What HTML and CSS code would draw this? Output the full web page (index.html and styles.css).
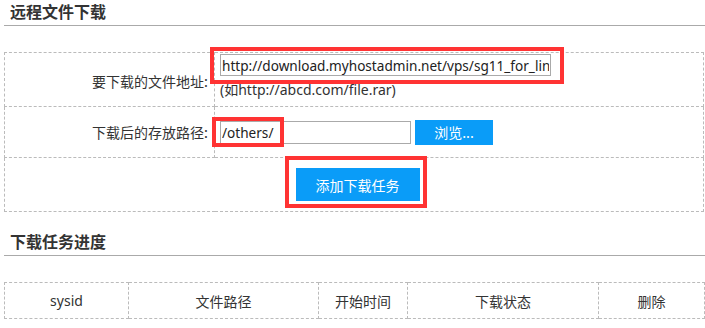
FILE: index.html
```html
<!DOCTYPE html>
<html lang="zh-CN">
<head>
<meta charset="utf-8">
<title>远程文件下载</title>
<link rel="stylesheet" href="styles.css">
</head>
<body>
<div class="page">
  <h2 class="title">远程文件下载</h2>
  <table class="form">
    <colgroup><col class="c-lbl"><col></colgroup>
    <tr class="r1">
      <td class="lbl">要下载的文件地址:</td>
      <td class="val">
        <input class="field url" type="text" value="http://download.myhostadmin.net/vps/sg11_for_linux.tar.gz">
        <div class="hint">(如http://abcd.com/file.rar)</div>
      </td>
    </tr>
    <tr class="r2">
      <td class="lbl">下载后的存放路径:</td>
      <td class="val">
        <div class="inline">
          <input class="field path" type="text" value="/others/">
          <button class="btn browse" type="button">浏览...</button>
        </div>
      </td>
    </tr>
    <tr class="r3">
      <td class="act" colspan="2"><button class="btn add" type="button">添加下载任务</button></td>
    </tr>
  </table>

  <h2 class="title t2">下载任务进度</h2>
  <table class="list">
    <colgroup>
      <col class="w1"><col class="w2"><col class="w3"><col class="w4"><col class="w5">
    </colgroup>
    <tr>
      <th>sysid</th>
      <th>文件路径</th>
      <th>开始时间</th>
      <th>下载状态</th>
      <th>删除</th>
    </tr>
  </table>

  <div class="mark m1"></div>
  <div class="mark m2"></div>
  <div class="mark m3"></div>
</div>
</body>
</html>
```

FILE: styles.css
```css
html, body {
  margin: 0;
  padding: 0;
  background: #fff;
}
body {
  font-family: "Noto Sans", "Noto Sans CJK SC", sans-serif;
  font-size: 14px;
  color: #333;
}
.page {
  position: relative;
  padding-left: 4px;
}
.title {
  margin: 0;
  height: 26px;
  box-sizing: border-box;
  padding: 1px 0 0 6px;
  line-height: 20px;
  font-size: 16px;
  font-weight: bold;
  color: #333;
  font-family: "Noto Sans CJK SC", sans-serif;
  border-bottom: 1px solid #aaa;
}
.t2 {
  margin-top: 18px;
}
table {
  border-collapse: collapse;
  width: 700px;
  table-layout: fixed;
}
td, th {
  border: 1px dashed #bbb;
  padding: 0;
}
.form {
  margin-top: 26px;
}
.c-lbl {
  width: 210px;
}
.lbl {
  text-align: right;
  padding-right: 6px;
  font-family: "Noto Sans CJK SC", sans-serif;
  vertical-align: middle;
}
.val {
  padding-left: 5px;
}
.r1 td {
  height: 51px;
}
.r1 .val {
  vertical-align: top;
  padding-top: 1px;
}
.r1 .lbl {
  padding-top: 2px;
}
.r2 td {
  height: 50px;
}
.r3 td {
  height: 53px;
}
.field {
  display: block;
  box-sizing: border-box;
  height: 22px;
  margin: 0;
  padding: 0 1px;
  border: 1px solid #aaa;
  font-family: "Noto Sans", "Noto Sans CJK SC", sans-serif;
  font-size: 13.6px;
  color: #222;
  outline: none;
}
.url {
  width: 331px;
}
.hint {
  margin-top: 4px;
  line-height: 19px;
}
.inline {
  display: flex;
  align-items: center;
  gap: 4px;
}
.path {
  width: 191px;
  height: 23px;
}
.btn {
  border: 0;
  margin: 0;
  padding: 0;
  background: #0a9cf8;
  color: #fff;
  font-family: "Noto Sans CJK SC", sans-serif;
  cursor: pointer;
}
.browse {
  width: 78px;
  height: 25px;
  font-size: 14px;
}
.act {
  text-align: center;
  padding-left: 7px;
  vertical-align: middle;
}
.add {
  width: 124px;
  height: 33px;
  font-size: 14px;
}
.list {
  margin-top: 26px;
}
.w1 { width: 124px; }
.w2 { width: 190px; }
.w3 { width: 89px; }
.w4 { width: 191px; }
.w5 { width: 106px; }
.list th {
  height: 35px;
  font-weight: normal;
  font-size: 14px;
  text-align: center;
  vertical-align: middle;
  font-family: "Noto Sans", "Noto Sans CJK SC", sans-serif;
}
.mark {
  position: absolute;
  border: 4px solid #f33;
  box-sizing: border-box;
  pointer-events: none;
}
.m1 { left: 210px; top: 47px; width: 354px; height: 37px; }
.m2 { left: 212px; top: 117px; width: 72px; height: 30px; }
.m3 { left: 285px; top: 156px; width: 142px; height: 52px; }
```
